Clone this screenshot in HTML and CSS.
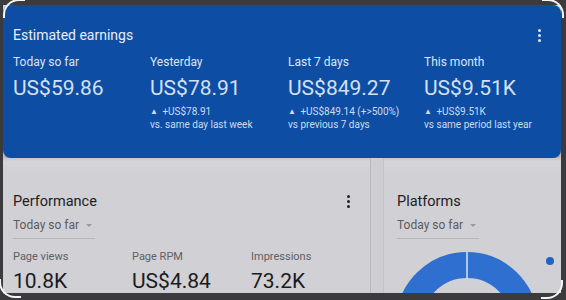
FILE: index.html
```html
<html>

<head>
    <meta charset="utf-8">
    <link rel="stylesheet" href="styles.css">
</head>

<body>
    <span class="corner tl"></span>
    <span class="corner tr"></span>
    <span class="corner bl"></span>
    <span class="corner br"></span>

    <div class="screen">
        <div class="earnings">
            <div class="earnings-head">
                <span class="earnings-title">Estimated earnings</span>
                <span class="kebab light"><i></i><i></i><i></i></span>
            </div>
            <div class="earnings-grid">
                <div class="stat">
                    <div class="stat-label">Today so far</div>
                    <div class="stat-value">US$59.86</div>
                </div>
                <div class="stat">
                    <div class="stat-label">Yesterday</div>
                    <div class="stat-value">US$78.91</div>
                    <div class="stat-delta"><span class="up">&#9650;</span> +US$78.91</div>
                    <div class="stat-delta">vs. same day last week</div>
                </div>
                <div class="stat">
                    <div class="stat-label">Last 7 days</div>
                    <div class="stat-value">US$849.27</div>
                    <div class="stat-delta"><span class="up">&#9650;</span> +US$849.14 (+&gt;500%)</div>
                    <div class="stat-delta">vs previous 7 days</div>
                </div>
                <div class="stat">
                    <div class="stat-label">This month</div>
                    <div class="stat-value">US$9.51K</div>
                    <div class="stat-delta"><span class="up">&#9650;</span> +US$9.51K</div>
                    <div class="stat-delta">vs same period last year</div>
                </div>
            </div>
        </div>

        <div class="lower">
            <div class="panel performance">
                <div class="panel-head">
                    <span class="panel-title">Performance</span>
                    <span class="kebab dark"><i></i><i></i><i></i></span>
                </div>
                <div class="range">Today so far <span class="caret"></span></div>
                <div class="metrics">
                    <div class="metric">
                        <div class="metric-label">Page views</div>
                        <div class="metric-value">10.8K</div>
                    </div>
                    <div class="metric">
                        <div class="metric-label">Page RPM</div>
                        <div class="metric-value">US$4.84</div>
                    </div>
                    <div class="metric">
                        <div class="metric-label">Impressions</div>
                        <div class="metric-value">73.2K</div>
                    </div>
                </div>
            </div>
            <div class="divider"></div>
            <div class="panel platforms">
                <div class="panel-head">
                    <span class="panel-title">Platforms</span>
                </div>
                <div class="range">Today so far <span class="caret"></span></div>
                <div class="chart-row">
                    <svg class="donut" width="142" height="142" viewBox="0 0 142 142">
                        <circle cx="71" cy="71" r="58" fill="none" stroke="#2f6fcf" stroke-width="26" />
                        <line x1="71" y1="0" x2="71" y2="27" stroke="#d6e2f4" stroke-width="1.5" />
                    </svg>
                    <span class="legend-dot"></span>
                </div>
            </div>
        </div>
    </div>
</body>

</html>
```

FILE: styles.css
```css
body {
    margin: 0;
    padding: 5px 5px 0 3px;
    width: 558px;
    height: 295px;
    overflow: hidden;
    background: #3b3b3d;
    font-family: Roboto, "Liberation Sans", sans-serif;
}

.screen {
    height: 288px;
    background: #d1d0d4;
    overflow: hidden;
}

/* blue earnings card */
.earnings {
    height: 153px;
    box-sizing: border-box;
    padding: 20px 10px 0 10px;
    background: #0d4ea4;
    border-radius: 8px;
    box-shadow: 0 2px 3px rgba(0, 0, 0, 0.25);
}

.earnings-head {
    display: flex;
    justify-content: space-between;
    align-items: center;
    height: 20px;
}

.earnings-title {
    font-size: 14px;
    color: #e6edf8;
}

.earnings-grid {
    display: grid;
    grid-template-columns: 137px 138px 136px 130px;
    margin-top: 9px;
}

.stat-label {
    font-size: 12px;
    line-height: 16px;
    color: #dbe5f5;
}

.stat-value {
    font-size: 21px;
    line-height: 26px;
    margin-top: 5px;
    color: #d4e0f4;
}

.stat-delta {
    font-size: 10px;
    line-height: 13px;
    color: #cddaf0;
}

.stat-value + .stat-delta {
    margin-top: 4px;
}

.up {
    font-size: 8px;
    vertical-align: 1px;
    margin-right: 2px;
}

.kebab {
    display: flex;
    flex-direction: column;
    gap: 2px;
    padding: 0 4px;
}

.kebab i {
    display: block;
    width: 3px;
    height: 3px;
    border-radius: 50%;
}

.kebab.light i {
    background: #dce6f6;
}

.kebab.dark i {
    background: #222;
}

.earnings .kebab {
    margin-right: 6px;
}

/* lower panels */
.lower {
    display: flex;
    height: 135px;
    background: linear-gradient(#c8c7cc 0, #d6d5d9 4px, #d1d0d4 14px);
}

.panel {
    padding-top: 34px;
}

.performance {
    width: 357px;
    padding-left: 10px;
}

.platforms {
    flex: 1;
    padding-left: 13px;
    overflow: hidden;
}

.divider {
    width: 12px;
    border-left: 1px solid #b9b8bd;
    border-right: 1px solid #c4c3c8;
    background: #cecdd1;
}

.panel-head {
    display: flex;
    justify-content: space-between;
    align-items: center;
    height: 18px;
}

.panel-title {
    font-size: 14.5px;
    color: #202124;
}

.performance .kebab {
    margin-right: 16px;
}

.range {
    width: 82px;
    margin-top: 9px;
    padding-bottom: 6px;
    border-bottom: 1px solid #b7b6bb;
    font-size: 12px;
    line-height: 13px;
    white-space: nowrap;
    color: #5c5c60;
}

.caret {
    display: inline-block;
    margin-left: 4px;
    vertical-align: 2px;
    border-left: 3.5px solid transparent;
    border-right: 3.5px solid transparent;
    border-top: 3.5px solid #9a9a9e;
}

.metrics {
    display: flex;
    margin-top: 11px;
}

.metric {
    width: 119px;
}

.metric-label {
    font-size: 11px;
    line-height: 14px;
    color: #5f5f63;
}

.metric-value {
    font-size: 21px;
    line-height: 24px;
    margin-top: 5px;
    color: #1b1b1d;
}

.chart-row {
    display: flex;
    align-items: flex-start;
    margin-top: 13px;
}

.donut {
    display: block;
    margin-left: -1px;
}

.legend-dot {
    width: 8px;
    height: 8px;
    margin: 5px 0 0 8px;
    border-radius: 50%;
    background: #1f63c6;
}

/* white rounded corners of the captured frame */
.corner {
    position: absolute;
    width: 20px;
    height: 17px;
    border: 0 solid #f4f4f6;
}

.corner.tl {
    left: 3px;
    top: -1px;
    border-top-width: 2px;
    border-left-width: 2px;
    border-top-left-radius: 16px;
}

.corner.tr {
    right: 2px;
    top: -1px;
    border-top-width: 2px;
    border-right-width: 2px;
    border-top-right-radius: 16px;
}

.corner.bl {
    left: -1px;
    bottom: 2px;
    border-bottom-width: 2px;
    border-left-width: 2px;
    border-bottom-left-radius: 16px;
}

.corner.br {
    right: 3px;
    bottom: 1px;
    border-bottom-width: 2px;
    border-right-width: 2px;
    border-bottom-right-radius: 16px;
}
```
